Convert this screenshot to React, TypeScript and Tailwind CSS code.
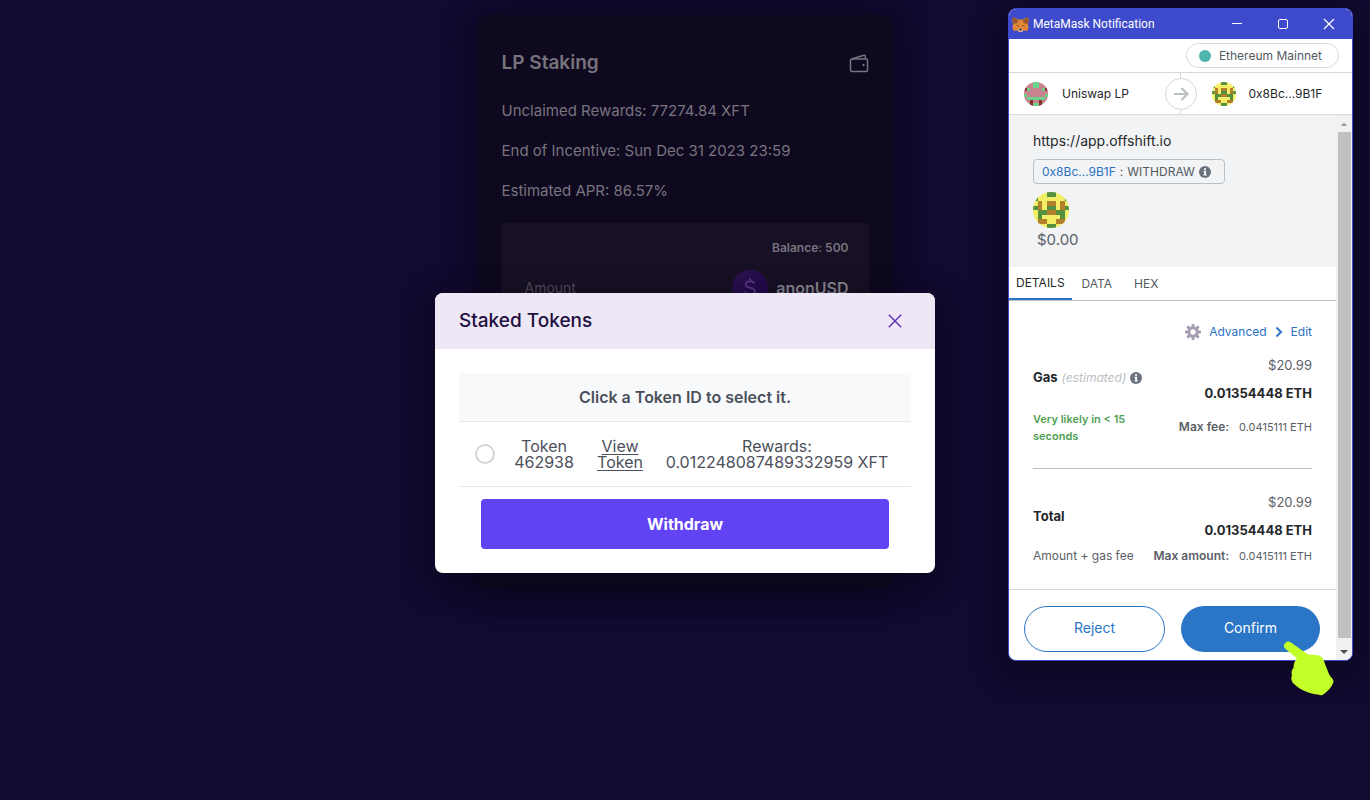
import React from "react";

const PINK = { a: "#c9838f", g: "#6bd48b", r: "#8f2f33" };
const YELLOW = { a: "#f2ee66", g: "#55903f", r: "#b5802b" };

const uniswapRows = ["...gg...", "...gg...", "rg....gr", "........", "g......g", ".gggggg.", "..r..r..", ".grggrg."];
const accountRows = ["...gg...", "g......g", ".r.rr.r.", "gr.gg.rg", ".ggrrgg.", ".g....g.", ".rr..rr.", "...gg..."];

function Identicon({ rows, colors, className }: { rows: string[]; colors: { a: string; g: string; r: string }; className: string }) {
  return (
    <svg viewBox="0 0 8 8" className={"rounded-full " + className} aria-hidden="true">
      <rect width="8" height="8" fill={colors.a} />
      <g shapeRendering="crispEdges">
        {rows.map((row, y) =>
          row.split("").map((c, x) =>
            c === "g" || c === "r" ? <rect key={x + "-" + y} x={x} y={y} width="1" height="1" fill={colors[c]} /> : null
          )
        )}
      </g>
    </svg>
  );
}

function Fox() {
  return (
    <svg viewBox="0 0 17 15" className="h-[15px] w-[17px]" aria-hidden="true">
      <path d="M1 0L6.500 2.500h4L16 0L16.800 4.500L15.800 7L16.600 10.500L15.300 14L11.500 13.600L10 15H7L5.500 13.600L1.700 14L0.400 10.500L1.200 7L0.200 4.500Z" fill="#e08436" />
      <path d="M1 0L6.500 3.200L5 6L1.500 7L0.200 4.500Z" fill="#96592f" />
      <path d="M16 0L10.500 3.200L12 6L15.500 7L16.800 4.500Z" fill="#96592f" />
      <path d="M4.300 8.300L6.500 8.600L6.300 9.600Z" fill="#4a3226" />
      <path d="M12.700 8.300L10.500 8.600L10.700 9.600Z" fill="#4a3226" />
      <path d="M5.800 12.200L7 11.500H10L11.200 12.200L10 14.700H7Z" fill="#d8c3b4" />
      <path d="M7.200 11.800H9.800L9.400 13.500H7.600Z" fill="#251a18" />
    </svg>
  );
}

function InfoIcon() {
  return (
    <svg viewBox="0 0 12 12" className="h-3 w-3 shrink-0" aria-hidden="true">
      <circle cx="6" cy="6" r="6" fill="#6a737d" />
      <rect x="5.100" y="2.200" width="1.900" height="1.700" fill="#fff" />
      <path d="M4.500 4.800H7V8.500H7.800V9.600H4.400V8.500H5.200V5.900H4.500Z" fill="#fff" />
    </svg>
  );
}

function Gear() {
  return (
    <svg viewBox="0 0 16 16" className="h-4 w-4" aria-hidden="true">
      <g fill="#a79db3">
        {[0, 45, 90, 135].map((a) => (
          <rect key={a} x="6.500" y="0" width="3" height="16" rx="0.800" transform={`rotate(${a} 8 8)`} />
        ))}
        <circle cx="8" cy="8" r="5.600" />
      </g>
      <circle cx="8" cy="8" r="2.700" fill="#fff" />
    </svg>
  );
}

function StakingCard() {
  return (
    <main className="mx-auto h-[572px] w-[415px] rounded-lg bg-[#0f0920] px-6 pt-8 text-base text-[#77747e] shadow-[0_4px_32px_rgba(8,4,20,0.7)]">
      <div className="flex h-8 items-center justify-between">
        <h1 className="text-[19px] font-semibold">LP Staking</h1>
        <svg viewBox="0 0 20 20" className="h-5 w-5" fill="none" stroke="#77747e" strokeWidth="1.500" aria-label="Wallet">
          <path d="M1.500 7.500A1.500 1.500 0 0 1 3 6H17A1.500 1.500 0 0 1 18.500 7.500V17A1.500 1.500 0 0 1 17 18.500H3A1.500 1.500 0 0 1 1.500 17Z" />
          <path d="M2.500 6L15 2.200A1 1 0 0 1 16.300 3.200V6" />
          <path d="M13.500 12H15.500" strokeWidth="2" />
        </svg>
      </div>
      <div className="mt-3 text-[15px]">
        <p className="h-10 leading-10">Unclaimed Rewards: 77274.84 XFT</p>
        <p className="h-10 leading-10">End of Incentive: Sun Dec 31 2023 23:59</p>
        <p className="h-10 leading-10">Estimated APR: 86.57%</p>
      </div>
      <section className="mt-3 rounded bg-[#181125] px-5 pt-[17px] pb-10">
        <p className="text-right text-xs leading-4 font-semibold">Balance: 500</p>
        <div className="mt-[14px] flex items-center justify-between">
          <span className="pl-[3px] text-sm text-[#514c5b]">Amount</span>
          <div className="flex items-center gap-2">
            <svg viewBox="0 0 36 36" className="h-9 w-9" aria-hidden="true">
              <defs>
                <linearGradient id="coin" x1="0" y1="0" x2="1" y2="1">
                  <stop offset="0" stopColor="#2d1550" />
                  <stop offset="0.500" stopColor="#240a4d" />
                </linearGradient>
              </defs>
              <circle cx="18" cy="18" r="18" fill="url(#coin)" />
              <path d="M22.500 13.500C21.700 11.800 20 11.200 18 11.200C15.300 11.200 13.600 12.600 13.600 14.500C13.600 19 22.800 16.500 22.800 21C22.800 23.500 20.500 24.500 18 24.500C15.500 24.500 13.500 23.500 13 21.500M18 8.500V11M18 24.500V27" fill="none" stroke="#573382" strokeWidth="2" />
            </svg>
            <span className="font-semibold text-[#8b8791]">anonUSD</span>
          </div>
        </div>
      </section>
    </main>
  );
}

function StakedTokensDialog() {
  return (
    <div role="dialog" aria-labelledby="staked-title" className="w-[500px] overflow-hidden rounded-lg bg-white text-[#4c505b] shadow-[0_8px_32px_rgba(6,4,16,0.6)]">
      <header className="flex h-14 items-center justify-between bg-[#eee7f6] px-6">
        <h2 id="staked-title" className="text-[19px] font-medium text-[#1e1040]">Staked Tokens</h2>
        <button aria-label="Close" className="mr-[9px]">
          <svg viewBox="0 0 14 14" className="h-[14px] w-[14px]" stroke="#5f34bb" strokeWidth="1.500" aria-hidden="true">
            <path d="M0.800 0.800L13.200 13.200M13.200 0.800L0.800 13.200" />
          </svg>
        </button>
      </header>
      <div className="p-6">
        <table className="w-full text-center text-base leading-4">
          <thead>
            <tr className="border-b border-[#e5e7eb] bg-[#f8f9fb]">
              <th colSpan={4} className="h-12 font-semibold">Click a Token ID to select it.</th>
            </tr>
          </thead>
          <tbody>
            <tr className="border-b border-[#e5e7eb]">
              <td className="w-[52px]">
                <input id="token" type="radio" name="token" className="ml-4 block h-5 w-5 appearance-none rounded-full border-2 border-[#d1d5db] bg-white" />
              </td>
              <td className="h-[65px] w-[66px]">
                <label htmlFor="token">Token<br />462938</label>
              </td>
              <td className="w-[86px]">
                <a href="#view" className="underline underline-offset-2">View<br />Token</a>
              </td>
              <td className="pr-5 whitespace-nowrap">Rewards:<br />0.012248087489332959 XFT</td>
            </tr>
          </tbody>
        </table>
        <div className="px-[22px] pt-3">
          <button className="h-[50px] w-full rounded bg-[#6143f4] text-base font-bold text-white">Withdraw</button>
        </div>
      </div>
    </div>
  );
}

function FeeAmounts({ label, gap }: { label: string; gap: string }) {
  return (
    <div className="text-right whitespace-nowrap">
      <p className="text-[13px] leading-6 text-[#5b6067]">$20.99</p>
      <p className="mt-1 text-[13px] leading-6 font-bold text-[#24272a]">0.01354448 ETH</p>
      <p className={"text-[11px] leading-5 text-[#5b6067] " + gap}>
        <strong className="mr-2.5 text-xs font-semibold">{label}</strong>0.0415111 ETH
      </p>
    </div>
  );
}

function WalletWindow() {
  return (
    <aside className="absolute top-2 right-[17px] w-[345px] overflow-hidden rounded-lg border border-[#3d4acb] bg-white text-[#24272a] shadow-[0_8px_32px_rgba(6,4,16,0.6)]">
      <header className="flex h-[30px] items-center bg-[#3d4acb] pl-[3px] text-white">
        <Fox />
        <h2 className="ml-1 font-[Roboto,'Noto_Sans',sans-serif] text-xs">MetaMask Notification</h2>
        <div className="ml-auto flex items-center">
          <button aria-label="Minimize" className="flex w-[46px] justify-center">
            <svg viewBox="0 0 12 12" className="h-3 w-3" stroke="#fff" aria-hidden="true"><path d="M1 5.500H11" /></svg>
          </button>
          <button aria-label="Maximize" className="flex w-[46px] justify-center">
            <svg viewBox="0 0 12 12" className="h-3 w-3" stroke="#fff" fill="none" aria-hidden="true"><rect x="1.500" y="1.500" width="9" height="9" rx="1.500" /></svg>
          </button>
          <button aria-label="Close window" className="flex w-[46px] justify-center">
            <svg viewBox="0 0 12 12" className="h-3 w-3" stroke="#fff" strokeWidth="1.200" aria-hidden="true"><path d="M1 1L11 11M11 1L1 11" /></svg>
          </button>
        </div>
      </header>
      <div className="flex h-[34px] items-center justify-end border-b border-[#d6d9dc] pr-[13px]">
        <button className="flex h-[25px] items-center gap-2 rounded-full border border-[#d6d9dc] pr-4 pl-3 text-xs text-[#535a61]">
          <span className="h-3 w-3 rounded-full bg-[#4fb3b0]" />
          Ethereum Mainnet
        </button>
      </div>
      <div className="flex h-[42px] items-stretch border-b border-[#d6d9dc] text-xs">
        <div className="flex flex-1 items-center pl-[15px]">
          <Identicon rows={uniswapRows} colors={PINK} className="mr-[14px] h-6 w-6" />
          Uniswap LP
        </div>
        <div className="flex w-8 flex-col items-center">
          <span className="h-[5px] w-px bg-[#d6d9dc]" />
          <span className="flex h-8 w-8 shrink-0 items-center justify-center rounded-full border border-[#d6d9dc]">
            <svg viewBox="0 0 16 16" className="h-4 w-4" fill="none" stroke="#bbc0c5" strokeWidth="2.200" aria-hidden="true"><path d="M1 8H14M8.500 2L14.500 8L8.500 14" /></svg>
          </span>
          <span className="w-px flex-1 bg-[#d6d9dc]" />
        </div>
        <div className="flex flex-1 items-center pl-[15px]">
          <Identicon rows={accountRows} colors={YELLOW} className="mr-[13px] h-6 w-6" />
          0x8Bc...9B1F
        </div>
      </div>
      <div className="flex">
        <div className="min-w-0 flex-1">
          <section className="bg-[#f2f3f4] px-6 pt-4 pb-[15px]">
            <p className="h-5 text-sm leading-5">https://app.offshift.io</p>
            <div className="mt-2 flex h-[25px] w-[192px] items-center rounded border border-[#bbc0c5] pl-2 text-xs whitespace-nowrap text-[#535a61]">
              <a href="#contract" className="text-[#2a72c4]">0x8Bc...9B1F</a>
              <span className="mx-1">:</span>
              <span className="mr-1">WITHDRAW</span>
              <InfoIcon />
            </div>
            <Identicon rows={accountRows} colors={YELLOW} className="mt-2 h-9 w-9" />
            <p className="ml-1 h-6 text-[15px] leading-6 text-[#5b6067]">$0.00</p>
          </section>
          <nav className="flex h-[34px] items-stretch border-b border-[#bbc0c5] text-xs text-[#535a61]">
            <button className="border-b-2 border-[#2a75c6] px-[7px] text-[#24272a]">DETAILS</button>
            <button className="px-[10px]">DATA</button>
            <button className="px-3">HEX</button>
          </nav>
          <section className="px-6">
            <div className="flex h-[52px] items-end justify-end gap-2 pb-[13px] text-xs leading-4 text-[#2a72c4]">
              <Gear />
              <button className="h-4">Advanced</button>
              <svg viewBox="0 0 8 12" className="mb-0.5 h-3 w-2" fill="none" stroke="#2a72c4" strokeWidth="2" aria-hidden="true"><path d="M1.500 1.500L6 6L1.500 10.500" /></svg>
              <button className="h-4">Edit</button>
            </div>
            <div className="flex justify-between border-b border-[#bbc0c5] pb-[23px]">
              <div className="w-[110px] whitespace-nowrap">
                <p className="mt-[15px] flex h-5 items-center gap-1">
                  <strong className="text-[13px]">Gas</strong>
                  <em className="text-xs text-[#bbc0c5]">(estimated)</em>
                  <InfoIcon />
                </p>
                <p className="mt-[23px] text-[11px] leading-[17px] font-semibold text-[#4fa053]">Very likely in &lt; 15<br />seconds</p>
              </div>
              <FeeAmounts label="Max fee:" gap="mt-3" />
            </div>
            <div className="flex justify-between pt-[21px] pb-[23px]">
              <div className="whitespace-nowrap">
                <p className="mt-4 text-[13px] leading-5 font-bold">Total</p>
                <p className="mt-5 text-xs leading-5 text-[#5b6067]">Amount + gas fee</p>
              </div>
              <FeeAmounts label="Max amount:" gap="mt-1" />
            </div>
          </section>
          <footer className="flex gap-4 border-t border-[#d6d9dc] pt-4 pr-4 pb-2 pl-[15px] text-sm">
            <button className="h-[46px] flex-1 rounded-full border border-[#2a75c6] pb-0.5 text-[#2a75c6]">Reject</button>
            <button className="h-[46px] flex-1 rounded-full bg-[#2a75c6] pb-0.5 text-white">Confirm</button>
          </footer>
        </div>
        <div className="flex w-4 flex-col items-center bg-[#f1f1f1]" aria-hidden="true">
          <svg viewBox="0 0 16 17" className="h-[17px] w-4 shrink-0"><path d="M4.500 11L8 7.500L11.500 11Z" fill="#a3a3a3" /></svg>
          <span className="w-[13px] flex-1 bg-[#c1c1c1]" />
          <svg viewBox="0 0 16 22" className="h-[22px] w-4 shrink-0"><path d="M4 12L8 16L12 12Z" fill="#505050" /></svg>
        </div>
      </div>
    </aside>
  );
}

export default function App() {
  return (
    <div className="relative min-h-screen overflow-hidden bg-[#120a2f] pt-[15px] font-[Inter,'Liberation_Sans',sans-serif]">
      <StakingCard />
      <div className="absolute inset-0 flex items-start justify-center pt-[293px]">
        <StakedTokensDialog />
      </div>
      <WalletWindow />
      <svg viewBox="0 0 54 56" className="absolute top-[640px] right-[33px] h-14 w-[54px]" aria-hidden="true">
        <path d="M3.500 2C5 1.200 6.500 1.500 8 2.500L25 14.500C29 15 34 14.500 37 16C39.500 17.500 41 20 42 24L46 34C47.500 37.500 51 39 50.500 42C49 47 45 51 41 54C39 55.500 37 55.500 35 54.500C27 54 17 50 10.500 43.500C8.500 41.500 7.500 38 9 35.500C8 32.500 8.500 30 10.500 28C10.500 24 11.500 21 14 18.500L2 8.500C0 6.500 1 3.500 3.500 2Z" fill="#c2ff28" />
      </svg>
    </div>
  );
}
